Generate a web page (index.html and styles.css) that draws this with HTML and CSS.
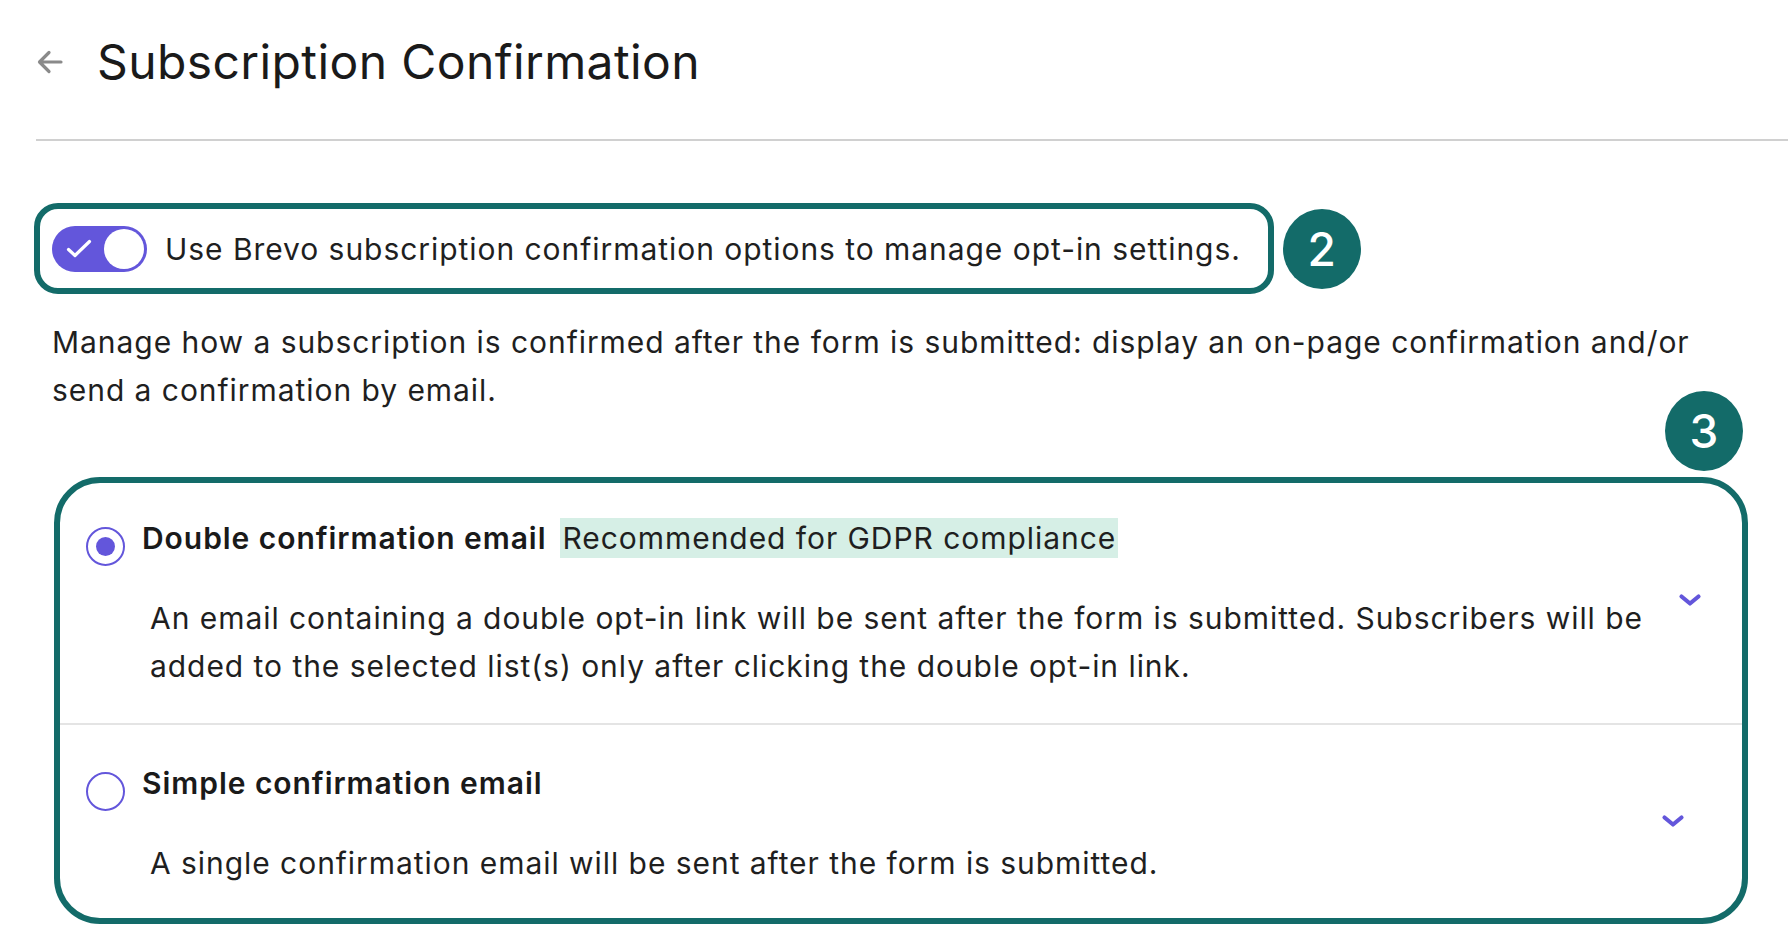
FILE: index.html
```html
<!DOCTYPE html>
<html lang="en">
<head>
<meta charset="utf-8">
<title>Subscription Confirmation</title>
<link rel="stylesheet" href="styles.css">
</head>
<body>
<header class="header">
  <svg class="back" viewBox="0 0 28 28" width="28" height="28" aria-hidden="true">
    <path d="M25 14H4M13 4.5L3.5 14L13 23.5" fill="none" stroke="#8a8a8a" stroke-width="3.2" stroke-linecap="round" stroke-linejoin="round"/>
  </svg>
  <h1 class="title">Subscription Confirmation</h1>
</header>
<div class="sep"></div>
<main class="content">
  <div class="toggle-row">
    <div class="toggle-box">
      <span class="toggle">
        <svg class="check" viewBox="0 0 26 20" width="26" height="20" aria-hidden="true">
          <path d="M2.5 10.5L9 16.5L23.5 2.5" fill="none" stroke="#fff" stroke-width="3.2" stroke-linecap="round" stroke-linejoin="round"/>
        </svg>
        <span class="knob"></span>
      </span>
      <span class="toggle-text">Use Brevo subscription confirmation options to manage opt-in settings.</span>
    </div>
    <span class="badge">2</span>
  </div>
  <p class="intro">Manage how a subscription is confirmed after the form is submitted: display an on-page confirmation and/or send a confirmation by email.</p>
  <div class="options-wrap">
    <span class="badge badge-over">3</span>
    <div class="options">
      <div class="option">
        <span class="radio radio-on"></span>
        <div class="option-body">
          <div class="option-head">
            <span class="option-title">Double confirmation email</span>
            <span class="tag">Recommended for GDPR compliance</span>
          </div>
          <p class="option-desc">An email containing a double opt-in link will be sent after the form is submitted. Subscribers will be added to the selected list(s) only after clicking the double opt-in link.</p>
        </div>
        <svg class="chev" viewBox="0 0 24 14" width="24" height="14" aria-hidden="true">
          <path d="M3.5 3.5L12 10.5L20.5 3.5" fill="none" stroke="#6356db" stroke-width="4.2" stroke-linecap="round" stroke-linejoin="round"/>
        </svg>
      </div>
      <div class="option option-last">
        <span class="radio"></span>
        <div class="option-body">
          <div class="option-head">
            <span class="option-title">Simple confirmation email</span>
          </div>
          <p class="option-desc">A single confirmation email will be sent after the form is submitted.</p>
        </div>
        <svg class="chev chev-2" viewBox="0 0 24 14" width="24" height="14" aria-hidden="true">
          <path d="M3.5 3.5L12 10.5L20.5 3.5" fill="none" stroke="#6356db" stroke-width="4.2" stroke-linecap="round" stroke-linejoin="round"/>
        </svg>
      </div>
    </div>
  </div>
</main>
</body>
</html>
```
FILE: styles.css
```css
* { box-sizing: border-box; }
html, body {
  margin: 0;
  padding: 0;
  background: #ffffff;
  color: #1f1f1f;
  font-family: Inter, "Noto Sans", "Liberation Sans", sans-serif;
}
.header {
  display: flex;
  align-items: center;
  height: 139px;
  padding: 0 0 16px 36px;
  gap: 33px;
}
.back { flex: none; }
.title {
  margin: 0;
  font-size: 48px;
  font-weight: 400;
  line-height: 56px;
  letter-spacing: 0.4px;
  color: #1a1a1a;
}
.sep {
  height: 2px;
  margin-left: 36px;
  background: #d0d0d0;
}
.content {
  padding: 62px 40px 0 34px;
}
.toggle-row {
  display: flex;
  align-items: center;
  gap: 9px;
}
.toggle-box {
  display: flex;
  align-items: center;
  gap: 18px;
  height: 91px;
  padding: 0 27px 0 12px;
  border: 6px solid #136b69;
  border-radius: 24px;
}
.toggle {
  position: relative;
  flex: none;
  display: flex;
  align-items: center;
  width: 95px;
  height: 46px;
  padding: 0 0 0 14px;
  border-radius: 23px;
  background: #6356db;
}
.check { display: block; }
.knob {
  position: absolute;
  right: 3px;
  top: 3px;
  width: 40px;
  height: 40px;
  border-radius: 50%;
  background: #ffffff;
}
.toggle-text,
.intro,
.option-title,
.tag,
.option-desc {
  font-size: 30px;
  letter-spacing: 0.95px;
}
.toggle-text {
  line-height: 40px;
  white-space: nowrap;
}
.badge {
  flex: none;
  display: flex;
  align-items: center;
  justify-content: center;
  width: 78px;
  height: 80px;
  border-radius: 50%;
  background: #136b69;
  color: #ffffff;
  font-size: 46px;
  font-weight: 500;
  line-height: 1;
}
.intro {
  margin: 24px 0 0 18px;
  line-height: 48px;
  max-width: 1680px;
}
.options-wrap {
  position: relative;
  margin: 63px 0 0 20px;
}
.badge-over {
  position: absolute;
  right: 5px;
  top: -86px;
}
.options {
  border: 6px solid #136b69;
  border-radius: 46px;
}
.option {
  display: grid;
  grid-template-columns: 40px 1fr 24px;
  column-gap: 16px;
  align-items: center;
  padding: 35px 40px 33px 26px;
  border-bottom: 2px solid #e4e4e4;
}
.option-last {
  border-bottom: none;
  padding: 38px 57px 31px 26px;
}
.radio {
  align-self: start;
  margin-top: 9px;
  width: 39px;
  height: 39px;
  border: 2.5px solid #6356db;
  border-radius: 50%;
  background: #fff;
  display: flex;
  align-items: center;
  justify-content: center;
}
.radio-on::after {
  content: "";
  width: 19px;
  height: 19px;
  border-radius: 50%;
  background: #6356db;
}
.option-body { min-width: 0; }
.option-head {
  display: flex;
  align-items: center;
  gap: 14px;
  height: 40px;
}
.option-title {
  font-weight: 600;
  line-height: 40px;
  color: #1a1a1a;
}
.tag {
  background: #d6efe6;
  line-height: 40px;
  padding: 0 2px;
}
.option-desc {
  margin: 36px 0 0 8px;
  line-height: 48px;
  max-width: 1510px;
}
.chev {
  display: block;
  margin-bottom: 8px;
}
```
